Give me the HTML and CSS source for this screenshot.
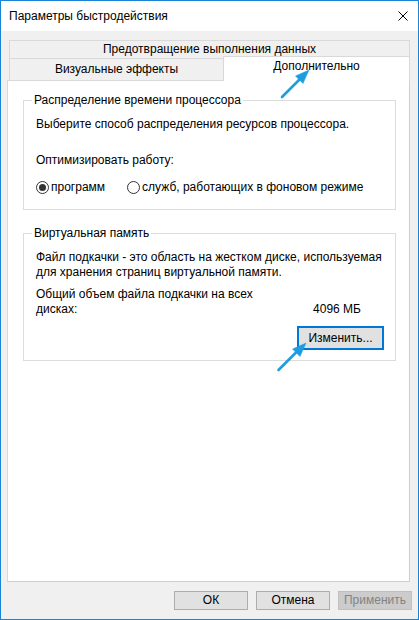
FILE: index.html
```html
<!DOCTYPE html>
<html lang="ru">
<head>
<meta charset="utf-8">
<title>Параметры быстродействия</title>
<link rel="stylesheet" href="styles.css">
</head>
<body>
<div class="window">
  <div class="titlebar">
    <span class="title">Параметры быстродействия</span>
    <svg class="close" width="10" height="10" viewBox="0 0 10 10"><path d="M0.5 0.5 L9.5 9.5 M9.5 0.5 L0.5 9.5" stroke="#000" stroke-width="1" fill="none"/></svg>
  </div>
  <div class="body">
    <div class="tabs">
      <div class="tab-row1">Предотвращение выполнения данных</div>
      <div class="tab-row2">
        <div class="tab tab-vis">Визуальные эффекты</div>
        <div class="tab tab-sel">Дополнительно</div>
      </div>
    </div>
    <div class="panel">
      <div class="group group-cpu">
        <div class="group-title">Распределение времени процессора</div>
        <div class="line l-choose">Выберите способ распределения ресурсов процессора.</div>
        <div class="line l-opt">Оптимизировать работу:</div>
        <div class="radios">
          <span class="radio checked"></span><span class="radio-label">программ</span>
          <span class="radio r2"></span><span class="radio-label">служб, работающих в фоновом режиме</span>
        </div>
      </div>
      <div class="group group-vm">
        <div class="group-title">Виртуальная память</div>
        <div class="line l-desc">Файл подкачки - это область на жестком диске, используемая для хранения страниц виртуальной памяти.</div>
        <div class="total">
          <div class="total-label">Общий объем файла подкачки на всех дисках:</div>
          <div class="total-value">4096 МБ</div>
        </div>
        <div class="change-row"><button class="btn btn-focus">Изменить...</button></div>
      </div>
    </div>
    <div class="footer">
      <button class="btn btn-foot">ОК</button>
      <button class="btn btn-foot">Отмена</button>
      <button class="btn btn-foot btn-disabled">Применить</button>
    </div>
  </div>
  <svg class="arrows" width="419" height="620" viewBox="0 0 419 620">
    <g fill="#1c9de0" stroke="#1c9de0">
      <line x1="282" y1="97" x2="301" y2="78" stroke-width="2.6" stroke-linecap="round"/>
      <polygon points="309,70 295.5,76 303,83.5" stroke-width="0.5"/>
      <line x1="278.5" y1="370" x2="298" y2="350.5" stroke-width="2.6" stroke-linecap="round"/>
      <polygon points="306,343 292.5,349 300,356.5" stroke-width="0.5"/>
    </g>
  </svg>
</div>
</body>
</html>
```

FILE: styles.css
```css
* { box-sizing: border-box; }
html, body { margin: 0; padding: 0; }
body {
  font-family: "Liberation Sans", Arial, sans-serif;
  font-size: 12px;
  color: #000;
  background: #f0f0f0;
}
.window {
  position: relative;
  width: 419px;
  height: 620px;
  border: 1px solid #1883d7;
  background: #f0f0f0;
  display: flex;
  flex-direction: column;
}
.titlebar {
  height: 30px;
  background: #fff;
  display: flex;
  align-items: center;
  justify-content: space-between;
  padding: 0 10px 0 8px;
}
.title { line-height: 15px; }
.close { display: block; }
.body {
  padding: 9px 0 0 6px;
}
.tabs {
  margin-left: 2px;
  width: 401px;
}
.tab-row1 {
  height: 18px;
  border: 1px solid #d9d9d9;
  border-bottom: none;
  text-align: center;
  line-height: 16px;
}
.tab-row2 {
  height: 22px;
  display: flex;
  align-items: flex-end;
}
.tab {
  text-align: center;
}
.tab-vis {
  width: 214px;
  height: 22px;
  border-top: 1px solid #d9d9d9;
  border-left: 1px solid #d9d9d9;
  line-height: 21px;
}
.tab-sel {
  position: relative;
  z-index: 1;
  width: 187px;
  height: 25px;
  margin-bottom: -1px;
  background: #fff;
  border: 1px solid #d9d9d9;
  border-bottom: none;
  padding-top: 2px;
  line-height: 15px;
}
.panel {
  width: 403px;
  height: 502px;
  background: #fff;
  border: 1px solid #d9d9d9;
  border-right-color: #cfcfcf;
  border-bottom-color: #cfcfcf;
  padding: 19px 0 0 15px;
}
.group {
  width: 373px;
  border: 1px solid #dcdcdc;
  padding: 0 0 0 12px;
  line-height: 15px;
}
.group-title {
  width: fit-content;
  margin: -8px 0 0 -4px;
  padding: 0 2px;
  background: #fff;
}
.l-choose { margin-top: 9px; }
.l-opt { margin-top: 21px; }
.radios {
  margin-top: 12px;
  display: flex;
  align-items: center;
  height: 15px;
}
.group-cpu { padding-bottom: 14px; }
.radio {
  width: 13px;
  height: 13px;
  border: 1px solid #333;
  border-radius: 50%;
  display: flex;
  align-items: center;
  justify-content: center;
  flex: none;
}
.radio.checked::after {
  content: "";
  width: 7px;
  height: 7px;
  border-radius: 50%;
  background: #333;
}
.radio-label { margin-left: 2px; }
.r2 { margin-left: 22px; }
.group-vm {
  margin-top: 23px;
  padding-bottom: 10px;
  padding-right: 11px;
}
.l-desc { margin-top: 9px; width: 350px; }
.total {
  margin-top: 7px;
  display: flex;
  align-items: flex-end;
  padding-right: 23px;
}
.total-label { width: 225px; }
.total-value { margin-left: auto; }
.change-row {
  margin-top: 9px;
  display: flex;
  justify-content: flex-end;
}
.btn {
  font-family: "Liberation Sans", Arial, sans-serif;
  font-size: 12px;
  color: #000;
  background: #e1e1e1;
  border: 1px solid #adadad;
  padding: 0;
  margin: 0;
}
.btn-focus {
  width: 87px;
  height: 24px;
  border: 2px solid #0078d7;
}
.footer {
  display: flex;
  justify-content: flex-end;
  gap: 8px;
  margin-top: 9px;
  padding-right: 6px;
}
.btn-foot {
  width: 74px;
  height: 19px;
  line-height: 15px;
}
.btn-disabled {
  background: #cccccc;
  border-color: #bfbfbf;
  color: #838383;
}
.arrows {
  position: absolute;
  top: -1px;
  left: -1px;
  z-index: 2;
  pointer-events: none;
}
```
